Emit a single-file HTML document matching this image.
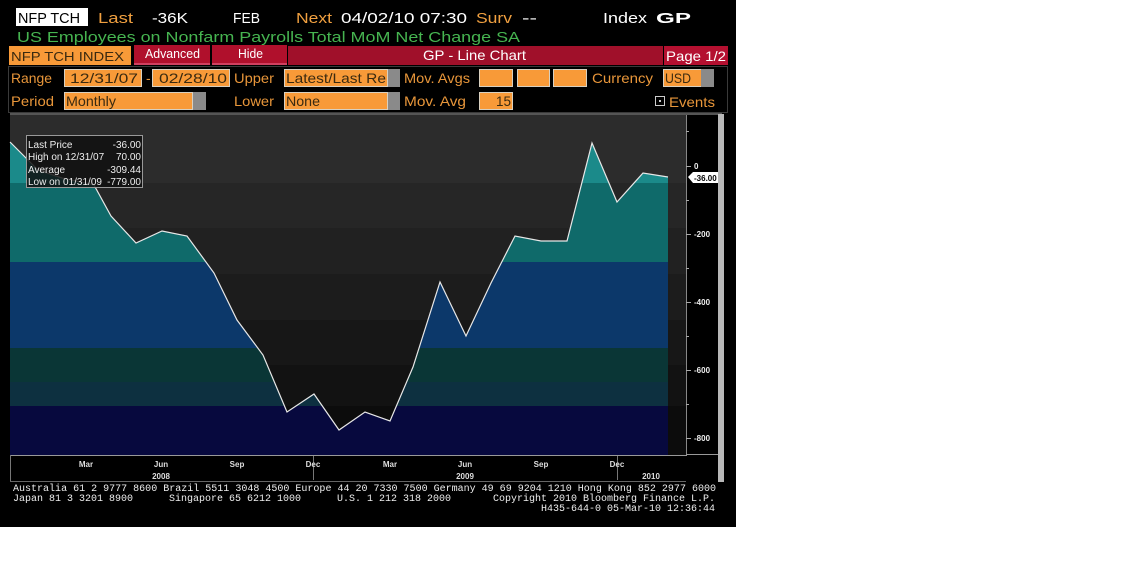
<!DOCTYPE html>
<html><head><meta charset="utf-8"><style>
html,body{margin:0;padding:0;background:#fff;width:1121px;height:578px;overflow:hidden}
svg{display:block}
</style></head><body>
<svg width="1121" height="578" xmlns="http://www.w3.org/2000/svg" font-family="Liberation Sans, sans-serif">
<defs>
<clipPath id="fc"><polygon points="10,142 38,170 62,178 94,185 111,216 136,243 162,231 187,236 214,273 237,320 263,355 287,412 314,394 339,430 365,412 390,421 413,367 440,282 466,336 491,283 515,236 541,241 567,241 592,143 617,202 643,173 668,177 668,455 10,455"/></clipPath>
</defs>
<rect x="0" y="0" width="736" height="527" fill="#000"/>
<!-- header row 1 -->
<rect x="16" y="8" width="72" height="18" fill="#fff"/>
<g font-size="15">
<text x="18" y="23" fill="#000" textLength="62" lengthAdjust="spacingAndGlyphs">NFP TCH</text>
<text x="98" y="23" fill="#f0a040" textLength="35" lengthAdjust="spacingAndGlyphs">Last</text>
<text x="152" y="23" fill="#fff" textLength="36" lengthAdjust="spacingAndGlyphs">-36K</text>
<text x="233" y="23" fill="#fff" textLength="27" lengthAdjust="spacingAndGlyphs">FEB</text>
<text x="296" y="23" fill="#f0a040" textLength="36" lengthAdjust="spacingAndGlyphs">Next</text>
<text x="341" y="23" fill="#fff" textLength="126" lengthAdjust="spacingAndGlyphs">04/02/10 07:30</text>
<text x="476" y="23" fill="#f0a040" textLength="36" lengthAdjust="spacingAndGlyphs">Surv</text>
<text x="522" y="23" fill="#fff" textLength="15" lengthAdjust="spacingAndGlyphs">--</text>
<text x="603" y="23" fill="#fff" textLength="44" lengthAdjust="spacingAndGlyphs">Index</text>
<text x="656" y="23" fill="#fff" font-weight="bold" textLength="35" lengthAdjust="spacingAndGlyphs">GP</text>
<text x="17" y="42" fill="#46b450" textLength="503" lengthAdjust="spacingAndGlyphs">US Employees on Nonfarm Payrolls Total MoM Net Change SA</text>
</g>
<!-- row 3 -->
<rect x="9" y="46" width="122" height="19" fill="#f89a38"/>
<text x="11" y="61" font-size="13" fill="#3a2a10" textLength="113" lengthAdjust="spacingAndGlyphs">NFP TCH INDEX</text>
<rect x="134" y="45" width="76" height="18" fill="#b0102c"/>
<rect x="134" y="63" width="76" height="2" fill="#d04060"/>
<text x="145" y="58" font-size="13" fill="#fff" textLength="55" lengthAdjust="spacingAndGlyphs">Advanced</text>
<rect x="212" y="45" width="75" height="18" fill="#b0102c"/>
<rect x="212" y="63" width="75" height="2" fill="#d04060"/>
<text x="238" y="58" font-size="13" fill="#fff" textLength="25" lengthAdjust="spacingAndGlyphs">Hide</text>
<rect x="288" y="46" width="375" height="19" fill="#a0102a"/>
<text x="423" y="60" font-size="14" fill="#fff" textLength="103" lengthAdjust="spacingAndGlyphs">GP - Line Chart</text>
<rect x="664" y="46" width="64" height="19" fill="#b41030"/>
<text x="666" y="61" font-size="14" fill="#fff" textLength="60" lengthAdjust="spacingAndGlyphs">Page 1/2</text>
<!-- panel -->
<rect x="8.5" y="66.5" width="719" height="46" fill="none" stroke="#3a3a3a"/>
<g font-size="14" fill="#e8963a">
<text x="11" y="83" textLength="41" lengthAdjust="spacingAndGlyphs">Range</text>
<text x="146" y="83">-</text>
<text x="234" y="83" textLength="40" lengthAdjust="spacingAndGlyphs">Upper</text>
<text x="404" y="83" textLength="66" lengthAdjust="spacingAndGlyphs">Mov. Avgs</text>
<text x="592" y="83" textLength="61" lengthAdjust="spacingAndGlyphs">Currency</text>
<text x="11" y="106" textLength="43" lengthAdjust="spacingAndGlyphs">Period</text>
<text x="234" y="106" textLength="40" lengthAdjust="spacingAndGlyphs">Lower</text>
<text x="404" y="106" textLength="62" lengthAdjust="spacingAndGlyphs">Mov. Avg</text>
<text x="669" y="107" textLength="46" lengthAdjust="spacingAndGlyphs">Events</text>
</g>
<g fill="#f89a38" stroke="#d8d0c0" stroke-width="1">
<rect x="64.5" y="69.5" width="77" height="17"/>
<rect x="152.5" y="69.5" width="77" height="17"/>
<rect x="284.5" y="69.5" width="103" height="17"/>
<rect x="479.5" y="69.5" width="33" height="17"/>
<rect x="517.5" y="69.5" width="32" height="17"/>
<rect x="553.5" y="69.5" width="33" height="17"/>
<rect x="663.5" y="69.5" width="38" height="17"/>
<rect x="64.5" y="92.5" width="128" height="17"/>
<rect x="284.5" y="92.5" width="103" height="17"/>
<rect x="479.5" y="92.5" width="33" height="17"/>
</g>
<g fill="#8a8a8a">
<rect x="388" y="69" width="12" height="18"/>
<rect x="701" y="69" width="13" height="18"/>
<rect x="193" y="92" width="13" height="18"/>
<rect x="388" y="92" width="12" height="18"/>
</g>
<g font-size="14" fill="#3a2a10">
<text x="70" y="83" textLength="68" lengthAdjust="spacingAndGlyphs">12/31/07</text>
<text x="159" y="83" textLength="68" lengthAdjust="spacingAndGlyphs">02/28/10</text>
<text x="286" y="83" textLength="100" lengthAdjust="spacingAndGlyphs">Latest/Last Re</text>
<text x="665" y="83" textLength="26" lengthAdjust="spacingAndGlyphs">USD</text>
<text x="66" y="106" textLength="50" lengthAdjust="spacingAndGlyphs">Monthly</text>
<text x="286" y="106" textLength="34" lengthAdjust="spacingAndGlyphs">None</text>
<text x="496" y="106" textLength="15" lengthAdjust="spacingAndGlyphs">15</text>
</g>
<rect x="655.5" y="96.5" width="9" height="9" fill="none" stroke="#ccc"/>
<rect x="659" y="100" width="2" height="2" fill="#ccc"/>
<!-- chart frame -->
<rect x="10" y="113" width="712" height="2" fill="#555"/>
<rect x="718" y="114" width="6" height="368" fill="#b8b8b8"/>
<!-- background bands -->
<rect x="10" y="115" width="677" height="68" fill="#2c2c2c"/>
<rect x="10" y="183" width="677" height="45" fill="#262626"/>
<rect x="10" y="228" width="677" height="46" fill="#212121"/>
<rect x="10" y="274" width="677" height="46" fill="#1c1c1c"/>
<rect x="10" y="320" width="677" height="45" fill="#171717"/>
<rect x="10" y="365" width="677" height="41" fill="#121212"/>
<rect x="10" y="406" width="677" height="49" fill="#0c0c0c"/>
<!-- filled area -->
<g clip-path="url(#fc)">
<rect x="10" y="115" width="660" height="68" fill="#1b8a8a"/>
<rect x="10" y="183" width="660" height="79" fill="#0f6a6a"/>
<rect x="10" y="262" width="660" height="86" fill="#0c386a"/>
<rect x="10" y="348" width="660" height="34" fill="#0a3636"/>
<rect x="10" y="382" width="660" height="24" fill="#0d3040"/>
<rect x="10" y="406" width="660" height="49" fill="#07093e"/>
</g>
<polyline points="10,142 38,170 62,178 94,185 111,216 136,243 162,231 187,236 214,273 237,320 263,355 287,412 314,394 339,430 365,412 390,421 413,367 440,282 466,336 491,283 515,236 541,241 567,241 592,143 617,202 643,173 668,177" fill="none" stroke="#e8e8e8" stroke-width="1.2"/>
<!-- legend -->
<rect x="26.5" y="135.5" width="116" height="52" fill="#111" fill-opacity="0.85" stroke="#999"/>
<g font-size="10" fill="#eee">
<text x="28" y="148">Last Price</text><text x="141" y="148" text-anchor="end">-36.00</text>
<text x="28" y="160">High on 12/31/07</text><text x="141" y="160" text-anchor="end">70.00</text>
<text x="28" y="173">Average</text><text x="141" y="173" text-anchor="end">-309.44</text>
<text x="28" y="185">Low on 01/31/09</text><text x="141" y="185" text-anchor="end">-779.00</text>
</g>
<!-- right axis -->
<rect x="686" y="115" width="1" height="340" fill="#888"/>
<g fill="#aaa"><rect x="686" y="131" width="3" height="1"/><rect x="686" y="200" width="3" height="1"/><rect x="686" y="268" width="3" height="1"/><rect x="686" y="336" width="3" height="1"/><rect x="686" y="404" width="3" height="1"/>
<rect x="686" y="166" width="5" height="1"/><rect x="686" y="234" width="5" height="1"/><rect x="686" y="302" width="5" height="1"/><rect x="686" y="370" width="5" height="1"/><rect x="686" y="438" width="5" height="1"/></g>
<g font-size="8" font-weight="bold" fill="#eee">
<text x="694" y="169">0</text><text x="694" y="237">-200</text><text x="694" y="305">-400</text><text x="694" y="373">-600</text><text x="694" y="441">-800</text>
</g>
<polygon points="688,177 693,172 718,172 718,183 693,183" fill="#fff"/>
<text x="694" y="181" font-size="8" font-weight="bold" fill="#000">-36.00</text>
<!-- bottom axis -->
<rect x="10" y="455" width="677" height="1" fill="#999"/>
<rect x="686" y="454" width="32" height="1" fill="#999"/>
<rect x="10" y="455" width="1" height="27" fill="#777"/>
<rect x="313" y="456" width="1" height="24" fill="#777"/>
<rect x="617" y="456" width="1" height="24" fill="#777"/>
<g font-size="8" font-weight="bold" fill="#ddd" text-anchor="middle">
<text x="86" y="467">Mar</text><text x="161" y="467">Jun</text><text x="237" y="467">Sep</text><text x="313" y="467">Dec</text>
<text x="390" y="467">Mar</text><text x="465" y="467">Jun</text><text x="541" y="467">Sep</text><text x="617" y="467">Dec</text>
<text x="161" y="479">2008</text><text x="465" y="479">2009</text><text x="651" y="479">2010</text>
</g>
<rect x="10" y="481" width="676" height="1" fill="#666"/>
<!-- footer -->
<g font-family="Liberation Mono, monospace" font-size="10" fill="#eee">
<text x="13" y="491" textLength="703" lengthAdjust="spacingAndGlyphs">Australia 61 2 9777 8600 Brazil 5511 3048 4500 Europe 44 20 7330 7500 Germany 49 69 9204 1210 Hong Kong 852 2977 6000</text>
<text x="13" y="501" textLength="120" lengthAdjust="spacingAndGlyphs">Japan 81 3 3201 8900</text>
<text x="169" y="501" textLength="132" lengthAdjust="spacingAndGlyphs">Singapore 65 6212 1000</text>
<text x="337" y="501" textLength="114" lengthAdjust="spacingAndGlyphs">U.S. 1 212 318 2000</text>
<text x="493" y="501" textLength="222" lengthAdjust="spacingAndGlyphs">Copyright 2010 Bloomberg Finance L.P.</text>
<text x="541" y="511" textLength="174" lengthAdjust="spacingAndGlyphs">H435-644-0 05-Mar-10 12:36:44</text>
</g>
</svg>
</body></html>
